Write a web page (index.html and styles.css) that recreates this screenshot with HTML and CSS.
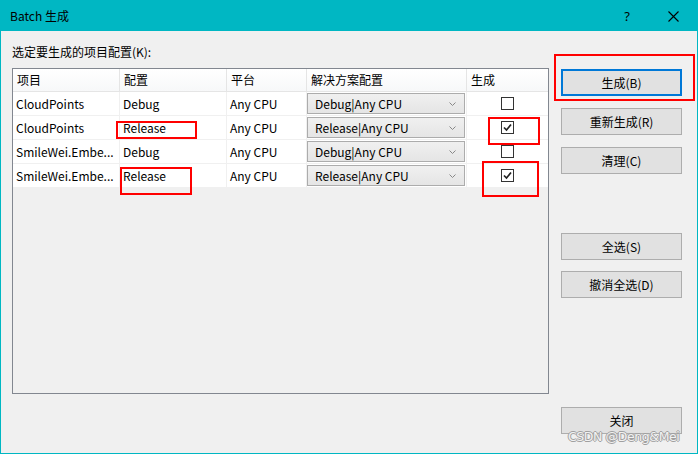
FILE: index.html
```html
<!DOCTYPE html>
<html>
<head>
<meta charset="utf-8">
<link rel="stylesheet" href="styles.css">
</head>
<body>
<div class="window">
  <div class="titlebar">
    <span class="title">Batch 生成</span>
    <div class="caption-btns">
      <span class="cap help">?</span>
      <span class="cap close"><svg width="11" height="11" viewBox="0 0 11 11"><path d="M0.5 0.5 L10.5 10.5 M10.5 0.5 L0.5 10.5" stroke="#000" stroke-width="1.1" fill="none"/></svg></span>
    </div>
  </div>
  <div class="content">
    <div class="left">
      <div class="label">选定要生成的项目配置(K):</div>
      <div class="listbox">
        <div class="grid head">
          <div class="hc">项目</div>
          <div class="hc">配置</div>
          <div class="hc">平台</div>
          <div class="hc">解决方案配置</div>
          <div class="hc">生成</div>
        </div>
        <div class="grid row">
          <div class="c">CloudPoints</div>
          <div class="c">Debug</div>
          <div class="c c3">Any CPU</div>
          <div class="c dd-cell"><div class="dd"><span>Debug|Any CPU</span><svg width="7" height="4" viewBox="0 0 7 4"><path d="M0.5 0.5 L3.5 3.5 L6.5 0.5" stroke="#888" fill="none"/></svg></div></div>
          <div class="c cb-cell"><span class="cb"></span></div>
        </div>
        <div class="grid row">
          <div class="c">CloudPoints</div>
          <div class="c">Release</div>
          <div class="c c3">Any CPU</div>
          <div class="c dd-cell"><div class="dd"><span>Release|Any CPU</span><svg width="7" height="4" viewBox="0 0 7 4"><path d="M0.5 0.5 L3.5 3.5 L6.5 0.5" stroke="#888" fill="none"/></svg></div></div>
          <div class="c cb-cell"><span class="cb"><svg width="11" height="11" viewBox="0 0 11 11"><path d="M2 5.5 L4.5 8 L9 2.5" stroke="#222" stroke-width="1.7" fill="none"/></svg></span></div>
        </div>
        <div class="grid row">
          <div class="c">SmileWei.Embe...</div>
          <div class="c">Debug</div>
          <div class="c c3">Any CPU</div>
          <div class="c dd-cell"><div class="dd"><span>Debug|Any CPU</span><svg width="7" height="4" viewBox="0 0 7 4"><path d="M0.5 0.5 L3.5 3.5 L6.5 0.5" stroke="#888" fill="none"/></svg></div></div>
          <div class="c cb-cell"><span class="cb"></span></div>
        </div>
        <div class="grid row">
          <div class="c">SmileWei.Embe...</div>
          <div class="c">Release</div>
          <div class="c c3">Any CPU</div>
          <div class="c dd-cell"><div class="dd"><span>Release|Any CPU</span><svg width="7" height="4" viewBox="0 0 7 4"><path d="M0.5 0.5 L3.5 3.5 L6.5 0.5" stroke="#888" fill="none"/></svg></div></div>
          <div class="c cb-cell"><span class="cb"><svg width="11" height="11" viewBox="0 0 11 11"><path d="M2 5.5 L4.5 8 L9 2.5" stroke="#222" stroke-width="1.7" fill="none"/></svg></span></div>
        </div>
      </div>
    </div>
    <div class="buttons">
      <div class="btn default">生成(B)</div>
      <div class="btn">重新生成(R)</div>
      <div class="btn">清理(C)</div>
      <div class="btn gap-sel">全选(S)</div>
      <div class="btn">撤消全选(D)</div>
      <div class="btn gap-close">关闭</div>
    </div>
  </div>
  <div class="mark m-btn"></div>
  <div class="mark m-rel1"></div>
  <div class="mark m-rel2"></div>
  <div class="mark m-cb1"></div>
  <div class="mark m-cb2"></div>
  <div class="watermark">CSDN @Deng&amp;Mei</div>
</div>
</body>
</html>
```

FILE: styles.css
```css
html, body {
  margin: 0;
  padding: 0;
  background: #f0f0f0;
}
body {
  font-family: "Noto Sans CJK SC", "Noto Sans", sans-serif;
  font-size: 12px;
  color: #000;
}
.window {
  position: relative;
  width: 698px;
  height: 454px;
  box-sizing: border-box;
  border: 1px solid #00b7c3;
  background: #f0f0f0;
  overflow: hidden;
}
.titlebar {
  height: 30px;
  background: #00b7c3;
  display: flex;
  align-items: center;
  justify-content: space-between;
  padding-left: 9px;
}
.title {
  font-size: 12px;
  line-height: 16px;
}
.caption-btns {
  display: flex;
  height: 30px;
}
.cap {
  width: 46px;
  height: 30px;
  display: flex;
  align-items: center;
  justify-content: center;
}
.help {
  font-family: "Noto Sans", sans-serif;
  font-size: 13px;
}
.close {
  width: 47px;
}
.content {
  display: flex;
  padding: 0 0 0 11px;
}
.left {
  width: 537px;
  padding-top: 13px;
}
.label {
  height: 16px;
  line-height: 16px;
  margin-bottom: 8px;
}
.listbox {
  width: 537px;
  height: 326px;
  box-sizing: border-box;
  border: 1px solid #828790;
  background: #f0f0f0;
}
.grid {
  display: grid;
  grid-template-columns: 107px 107px 80px 160px 81px;
}
.head {
  height: 23px;
  box-sizing: border-box;
  border-bottom: 1px solid #e5e5e5;
  background: linear-gradient(#ffffff, #f7f8f9);
}
.hc {
  border-right: 1px solid #e5e5e5;
  padding-left: 4px;
  line-height: 22px;
}
.hc:last-child {
  border-right: none;
}
.row {
  height: 24px;
  box-sizing: border-box;
  border-bottom: 1px solid #f0f0f0;
  background: #fff;
}
.c {
  border-right: 1px solid #f0f0f0;
  padding-left: 3px;
  line-height: 23px;
  white-space: nowrap;
  overflow: hidden;
}
.c:last-child {
  border-right: none;
}
.c3 {
  padding-left: 3px;
}
.dd-cell {
  padding: 1px 1px 0 0;
}
.dd {
  height: 21px;
  box-sizing: border-box;
  border: 1px solid #acacac;
  background: linear-gradient(#f0f0f0, #e5e5e5);
  display: flex;
  align-items: center;
  justify-content: space-between;
  padding: 1px 8px 0 7px;
  line-height: 18px;
}
.cb-cell {
  display: flex;
  align-items: center;
  justify-content: center;
  padding-left: 0;
  padding-right: 0;
}
.cb {
  width: 13px;
  height: 13px;
  box-sizing: border-box;
  border: 1px solid #333;
  background: #fff;
  display: flex;
  align-items: center;
  justify-content: center;
}
.buttons {
  margin-left: 12px;
  padding-top: 38px;
  display: flex;
  flex-direction: column;
  gap: 12px;
}
.btn {
  width: 121px;
  height: 27px;
  box-sizing: border-box;
  border: 1px solid #adadad;
  background: #e1e1e1;
  display: flex;
  align-items: center;
  justify-content: center;
  line-height: 16px;
}
.btn.default {
  border: 2px solid #0078d7;
}
.gap-sel {
  margin-top: 47px;
}
.buttons .btn:nth-child(5) {
  margin-top: -1px;
}
.gap-close {
  margin-top: 97px;
}
.mark {
  position: absolute;
  border: 2px solid #f00;
  box-sizing: border-box;
}
.m-btn { left: 553px; top: 53px; width: 141px; height: 47px; }
.m-rel1 { left: 115px; top: 120px; width: 81px; height: 18px; }
.m-rel2 { left: 119px; top: 166px; width: 72px; height: 28px; }
.m-cb1 { left: 487px; top: 116px; width: 52px; height: 28px; }
.m-cb2 { left: 481px; top: 160px; width: 57px; height: 36px; }
.watermark {
  position: absolute;
  left: 567px;
  top: 428px;
  font-family: "DejaVu Sans", "Liberation Sans", sans-serif;
  font-size: 12.5px;
  letter-spacing: -0.4px;
  color: #f2f2f2;
  text-shadow: 1px 0 0 #a0a0a0, -1px 0 0 #a0a0a0, 0 1px 0 #a0a0a0, 0 -1px 0 #a0a0a0;
  white-space: nowrap;
}
```
